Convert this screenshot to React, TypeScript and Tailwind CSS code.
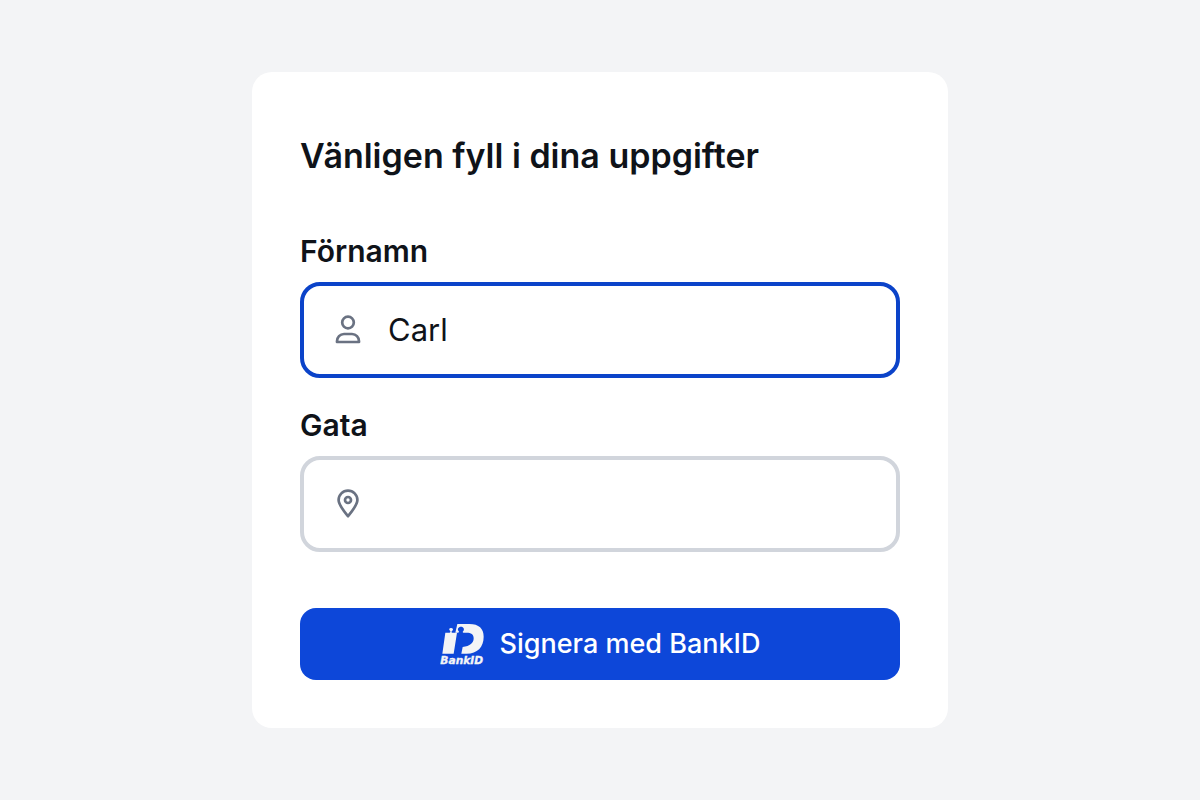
import React from 'react';

const UserIcon = () => (
  <svg className="w-8 h-8 shrink-0" viewBox="0 0 32 32" fill="none" stroke="currentColor" strokeWidth="2.7" strokeLinejoin="round" aria-hidden="true">
    <circle cx="16" cy="8.5" r="5.8" />
    <path d="M5 28v-.8C5 23.2 8 20 12 20h8c4 0 7 3.200 7 7.200v.8z" />
  </svg>
);

const PinIcon = () => (
  <svg className="w-8 h-8 shrink-0" viewBox="0 0 32 32" fill="none" stroke="currentColor" strokeWidth="2.7" strokeLinejoin="round" aria-hidden="true">
    <path d="M16 28.200C12 23.200 6.600 17 6.600 12a9.400 9.400 0 0 1 18.800 0c0 5-5.400 11.200-9.400 16.200z" />
    <circle cx="16" cy="12" r="3" />
  </svg>
);

const BankIdLogo = () => (
  <svg className="w-11 h-11 shrink-0" viewBox="30 21 132 132" fill="#f3f4f6" aria-hidden="true">
    {/* Left stem with the keyhole notch */}
    <path d="M46 53h13c3-2 3-4 1-6-4-3-3-8 3-8s8 5 4 8c-3 2-3 4-1 6h15l-10 63H37z" />
    {/* Bowl of the D, with the puzzle knob cut out of its top edge */}
    <path d="M82 27h36c29 0 43 14 43 38 0 31-19 51-51 51H94l4-20c22-2 33-12 33-26 0-12-8-17-21-17-4 0-7 1-10 0-3-1-2-3 0-5 4-5 1-13-7-13s-12 8-7 13c2 3 1 5-3 5h-7z" />
    <text x="31" y="147" fontSize="32" fontWeight="700" fontStyle="italic" fontFamily="'DejaVu Sans', sans-serif" stroke="#f3f4f6" strokeWidth="1">BankID</text>
  </svg>
);

type FieldProps = {
  id: string;
  label: string;
  icon: React.ReactNode;
  defaultValue?: string;
  active?: boolean;
};

const Field: React.FC<FieldProps> = ({ id, label, icon, defaultValue = '', active = false }) => (
  <div className="flex flex-col gap-2">
    <label htmlFor={id} className="text-[30px] leading-[46px] font-semibold">
      {label}
    </label>
    <div className={`flex items-center gap-6 h-24 px-7 rounded-[20px] border-4 bg-white text-gray-500 ${active ? 'border-[#0b43c9]' : 'border-gray-300'}`}>
      {icon}
      <input
        id={id}
        type="text"
        defaultValue={defaultValue}
        className="flex-1 min-w-0 bg-transparent text-[31px] text-[#0f1319] outline-none"
      />
    </div>
  </div>
);

const App: React.FC = () => {
  return (
    <main className="min-h-screen flex items-center justify-center bg-[#f3f4f6] text-[#0f1319] font-['Inter','Liberation_Sans',sans-serif]">
      <form className="w-full max-w-[696px] bg-white rounded-[20px] px-12 pt-15 pb-12" onSubmit={(e) => e.preventDefault()}>
        <h1 className="mb-12 text-[34px] leading-12 font-semibold">Vänligen fyll i dina uppgifter</h1>

        <div className="flex flex-col gap-6">
          <Field id="firstName" label="Förnamn" icon={<UserIcon />} defaultValue="Carl" active />
          <Field id="street" label="Gata" icon={<PinIcon />} />
        </div>

        <button type="submit" className="mt-14 w-full h-18 flex items-center justify-center gap-4 rounded-2xl bg-[#0d47d9] text-white text-[27px] font-medium cursor-pointer">
          <BankIdLogo />
          Signera med BankID
        </button>
      </form>
    </main>
  );
};

export default App;
